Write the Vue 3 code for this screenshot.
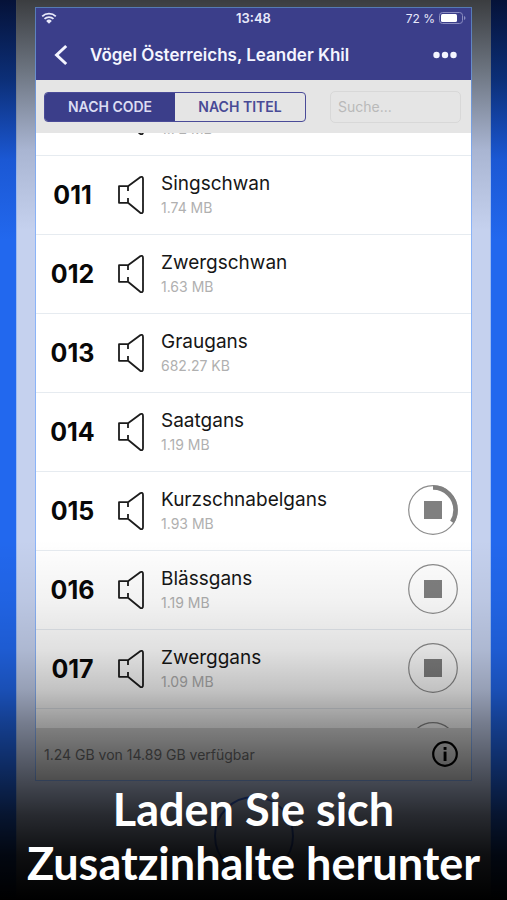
<script setup>
import { ref, onMounted } from 'vue';

const sortBy = ref('code');
const search = ref('');
const listRef = ref(null);

const tabs = [
  { id: 'code', label: 'NACH CODE' },
  { id: 'title', label: 'NACH TITEL' }
];

// progress: undefined = nothing queued, 0 = waiting, > 0 = share of the ring
const birds = ref([
  { code: '010', name: 'Höckerschwan', size: '1.72 MB' },
  { code: '011', name: 'Singschwan', size: '1.74 MB' },
  { code: '012', name: 'Zwergschwan', size: '1.63 MB' },
  { code: '013', name: 'Graugans', size: '682.27 KB' },
  { code: '014', name: 'Saatgans', size: '1.19 MB' },
  { code: '015', name: 'Kurzschnabelgans', size: '1.93 MB', progress: 34 },
  { code: '016', name: 'Blässgans', size: '1.19 MB', progress: 0 },
  { code: '017', name: 'Zwerggans', size: '1.09 MB', progress: 0 },
  { code: '018', name: 'Rothalsgans', size: '1.21 MB', progress: 0 }
]);

const stopDownload = (bird) => {
  bird.progress = undefined;
};

// Start with the first row mostly scrolled away
onMounted(() => {
  listRef.value.scrollTop = 56;
});
</script>

<template>
  <div class="stage">
    <div class="phone">
      <main class="screen">
        <div class="status-bar">
          <svg class="wifi" viewBox="0 0 16 12" width="16" height="12">
            <path d="M1.2 4.4a9.8 9.8 0 0 1 13.6 0M3.5 6.9a6.5 6.5 0 0 1 9 0" fill="none" stroke="currentColor" stroke-width="1.8" />
            <path d="M5.2 8.9a4 4 0 0 1 5.6 0L8 11.7z" fill="currentColor" />
          </svg>
          <span class="time">13:48</span>
          <span class="battery">
            72 %
            <svg viewBox="0 0 27 12" width="27" height="12">
              <rect x="0.5" y="0.5" width="23" height="11" rx="3" fill="none" stroke="#8b8dc0" />
              <rect x="2" y="2" width="16" height="8" rx="1.5" fill="#fff" />
              <path d="M25 4v4q1.5-.6 1.5-2T25 4z" fill="#8b8dc0" />
            </svg>
          </span>
        </div>

        <header class="nav-bar">
          <button class="nav-btn" aria-label="Zurück">
            <svg viewBox="0 0 14 22" width="14" height="22">
              <path d="M12.2 2 2.6 11l9.6 9" fill="none" stroke="currentColor" stroke-width="3" />
            </svg>
          </button>
          <h1 class="nav-title">Vögel Österreichs, Leander Khil</h1>
          <button class="nav-btn" aria-label="Mehr">
            <svg viewBox="0 0 24 8" width="24" height="8">
              <circle cx="3.5" cy="4" r="3.2" fill="currentColor" />
              <circle cx="12" cy="4" r="3.2" fill="currentColor" />
              <circle cx="20.5" cy="4" r="3.2" fill="currentColor" />
            </svg>
          </button>
        </header>

        <div class="toolbar">
          <div class="segments">
            <button
              v-for="tab in tabs"
              :key="tab.id"
              class="segment"
              :class="{ 'is-active': sortBy === tab.id }"
              @click="sortBy = tab.id"
            >
              {{ tab.label }}
            </button>
          </div>
          <input v-model="search" class="search" type="text" placeholder="Suche..." aria-label="Suche" />
        </div>

        <ul ref="listRef" class="list">
          <li v-for="bird in birds" :key="bird.code" class="row">
            <span class="code">{{ bird.code }}</span>
            <svg class="speaker" viewBox="0 0 26 38" width="26" height="38">
              <path
                d="M10 15v-4.8H1v16.6h9V22M10 10.2 22.2 1.2Q25 0 25 3v32q0 3-2.8 1.8L10 26.8"
                fill="none"
                stroke="currentColor"
                stroke-width="1.8"
                stroke-linejoin="round"
              />
            </svg>
            <div class="info">
              <span class="name">{{ bird.name }}</span>
              <span class="size">{{ bird.size }}</span>
            </div>
            <button
              v-if="bird.progress !== undefined"
              class="stop-btn"
              aria-label="Download stoppen"
              @click="stopDownload(bird)"
            >
              <svg viewBox="0 0 50 50" width="50" height="50">
                <circle cx="25" cy="25" r="24.3" fill="none" stroke="#8c8c8c" stroke-width="1.2" />
                <circle
                  v-if="bird.progress > 0"
                  cx="25"
                  cy="25"
                  r="22.5"
                  fill="none"
                  stroke="#808080"
                  stroke-width="4.4"
                  pathLength="100"
                  :stroke-dasharray="`${bird.progress} 100`"
                  transform="rotate(-90 25 25)"
                />
                <rect x="16" y="16" width="18" height="18" fill="#808080" />
              </svg>
            </button>
          </li>
        </ul>

        <footer class="footer">
          <span>1.24 GB von 14.89 GB verfügbar</span>
          <button class="info-btn" aria-label="Info">
            <svg viewBox="0 0 26 26" width="26" height="26">
              <circle cx="13" cy="13" r="11.8" fill="none" stroke="currentColor" stroke-width="2.2" />
              <rect x="11.6" y="6" width="2.9" height="2.9" fill="currentColor" />
              <path d="M11.6 10.6h2.9v9.4h-2.9z" fill="currentColor" />
            </svg>
          </button>
        </footer>
      </main>
      <div class="chin">
        <span class="home-button"></span>
      </div>
    </div>

    <!-- Darkens the lower part so the caption stays readable -->
    <div class="shade"></div>
    <p class="caption">Laden Sie sich<br />Zusatzinhalte herunter</p>
  </div>
</template>

<style>
body {
  margin: 0;
}
</style>

<style scoped>
.stage {
  position: relative;
  box-sizing: border-box;
  height: 100vh;
  min-height: 480px;
  padding: 0 16px;
  overflow: hidden;
  font-family: Inter, "Noto Sans", sans-serif;
  background: linear-gradient(#051238 0, #0c2f78 80px, #1b58d4 160px, #2268ee 240px);
}

.phone {
  box-sizing: border-box;
  height: 100%;
  padding: 8px 19px 0;
  display: flex;
  flex-direction: column;
  border: 1px solid;
  border-width: 0 1px;
  border-image: linear-gradient(#3c4046 0, #6d7684 80px, #9bb8ee 180px, #9bbcf8) 1;
  background: linear-gradient(#3b3d40 0, #6c7480 70px, #a9b5d2 150px, #c5d1ee 230px);
}

.screen {
  flex: 1;
  min-height: 0;
  display: flex;
  flex-direction: column;
  outline: 1px solid rgba(100, 160, 255, 0.6);
  background: #fff;
}

.status-bar {
  display: grid;
  grid-template-columns: 1fr auto 1fr;
  align-items: center;
  height: 20px;
  padding: 0 5px;
  font-size: 12px;
  color: #e8e9fa;
  background: #3b3e8a;
}

.time {
  font-size: 13px;
  font-weight: 600;
}

.battery {
  display: flex;
  align-items: center;
  justify-content: flex-end;
  gap: 4px;
}

.nav-bar {
  display: flex;
  align-items: center;
  height: 52px;
  padding: 2px 8px 0 12px;
  box-sizing: border-box;
  color: #f4f5ff;
  background: #3b3e8a;
}

.nav-title {
  flex: 1;
  margin: 0 0 0 16px;
  font-size: 17px;
  font-weight: 600;
  line-height: 24px;
  white-space: nowrap;
}

.nav-btn,
.stop-btn,
.info-btn {
  display: flex;
  padding: 0;
  border: none;
  color: inherit;
  background: none;
  cursor: pointer;
}

.nav-btn {
  padding: 6px;
}

.toolbar {
  display: grid;
  grid-template-columns: 2fr 1fr;
  align-items: center;
  gap: 24px;
  height: 53px;
  padding: 0 10px 0 8px;
  box-sizing: border-box;
  background: #e5e5e5;
}

.segments {
  display: flex;
  height: 30px;
  overflow: hidden;
  box-sizing: border-box;
  border: 1px solid #4a4b98;
  border-radius: 4px;
}

.segment {
  flex: 1;
  padding: 0;
  border: none;
  font-family: inherit;
  font-size: 14px;
  font-weight: 600;
  color: #484a96;
  background: transparent;
  cursor: pointer;
}

.segment.is-active {
  color: #dcddf2;
  background: #3b3e8a;
}

.search {
  width: 100%;
  min-width: 0;
  height: 32px;
  padding: 0 7px;
  box-sizing: border-box;
  border: 1px solid #d8d8d8;
  border-radius: 5px;
  font-family: inherit;
  font-size: 14px;
  background: transparent;
}

.search::placeholder {
  color: #b9b9b9;
  opacity: 1;
}

.list {
  flex: 1;
  min-height: 0;
  margin: 0;
  padding: 0;
  overflow-y: auto;
  list-style: none;
  scrollbar-width: none;
}

.row {
  display: flex;
  align-items: center;
  height: 79px;
  padding-right: 13px;
  box-sizing: border-box;
  border-bottom: 1px solid #e6ebf0;
}

.code {
  width: 73px;
  text-align: center;
  font-size: 25px;
  font-weight: 700;
  color: #080808;
}

.speaker {
  flex: none;
  margin: 0 17px 0 9px;
  color: #1c1c1c;
}

.info {
  flex: 1;
  min-width: 0;
  display: flex;
  flex-direction: column;
}

.name {
  font-size: 19px;
  line-height: 26px;
  color: #161616;
}

.size {
  font-size: 14px;
  line-height: 22px;
  color: #b0b0b0;
}

.stop-btn {
  margin-bottom: 2px;
}

.footer {
  display: flex;
  align-items: center;
  justify-content: space-between;
  height: 52px;
  padding: 0 13px 0 8px;
  font-size: 14px;
  color: #6c6c6c;
  background: #dcdcdc;
}

.info-btn {
  color: #000;
}

.chin {
  flex: none;
  display: flex;
  justify-content: center;
  height: 120px;
  padding-top: 16px;
  box-sizing: border-box;
}

.home-button {
  width: 80px;
  height: 80px;
  box-sizing: border-box;
  border: 2px solid #3c66d4;
  border-radius: 50%;
}

.shade {
  position: absolute;
  inset: auto 0 0;
  height: 360px;
  pointer-events: none;
  background: linear-gradient(
    transparent 0,
    rgba(0, 0, 0, 0.05) 60px,
    rgba(0, 0, 0, 0.12) 110px,
    rgba(0, 0, 0, 0.24) 150px,
    rgba(0, 0, 0, 0.4) 182px,
    rgba(0, 0, 0, 0.64) 238px,
    rgba(0, 0, 0, 0.8) 275px,
    rgba(0, 0, 0, 0.93) 315px,
    #000 360px
  );
}

.caption {
  position: absolute;
  inset: auto 0 10px;
  margin: 0;
  text-align: center;
  font-family: Lato, sans-serif;
  font-size: 45px;
  font-weight: 700;
  line-height: 54px;
  color: #fff;
}
</style>
